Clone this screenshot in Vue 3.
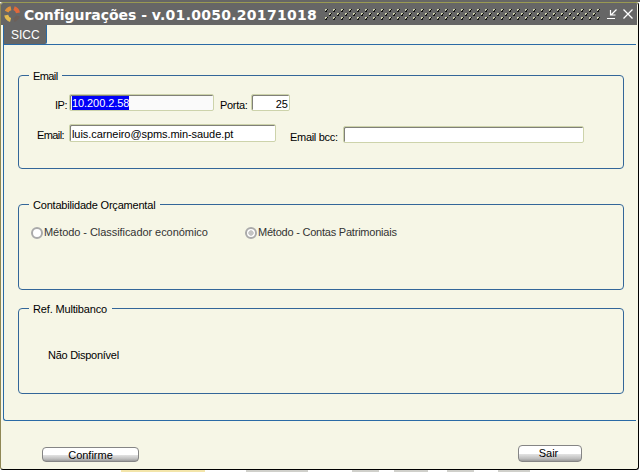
<script setup>
import { ref } from 'vue'
const ip = '10.200.2.58'
const porta = '25'
const email = 'luis.carneiro@spms.min-saude.pt'
const metodo = ref('contas')
</script>

<template>
  <div class="screen">
    <div class="window">
      <header class="titlebar">
        <svg class="logo" width="16" height="18" viewBox="0 0 16 18">
          <path d="M2.6 6.6A6.2 6.2 0 0 1 7 3.2" stroke="#e0913c" />
          <path d="M10 3.2A6.2 6.2 0 0 1 14 7.8" stroke="#e0683a" />
          <path d="M2.2 10.2A6.2 6.2 0 0 0 6.6 15" stroke="#e4bb50" />
          <path d="M10 15A6.2 6.2 0 0 0 14 11" stroke="#6d5f58" />
        </svg>
        <h1 class="title"><span class="name">Configurações - </span><span class="version">v.01.0050.20171018</span></h1>
        <svg class="grip" width="276" height="11">
          <defs>
            <pattern id="dots" width="8" height="8" patternUnits="userSpaceOnUse" shape-rendering="crispEdges">
              <path d="M1 1h1v1h-1zM2 0h1v1h-1zM5 5h1v1h-1zM6 4h1v1h-1zM0 2h2v1h-2zM4 6h2v1h-2z" fill="#111" />
              <path d="M0 0h2v1h-1v1h-1zM4 4h2v1h-1v1h-1z" fill="#d0d3b0" />
            </pattern>
          </defs>
          <rect width="276" height="11" fill="url(#dots)" />
        </svg>
        <svg class="tool" width="10" height="11" viewBox="0 0 10 11">
          <path d="M0 9.5h8M3.5 1v5h5M9.5 0.5L4 6" stroke="#fff" stroke-width="1.2" fill="none" />
        </svg>
        <svg class="close" width="10" height="10" viewBox="0 0 10 10">
          <path d="M0.5 0.5l9 9M9.5 0.5l-9 9" stroke="#fff" stroke-width="1.3" fill="none" />
        </svg>
      </header>

      <main class="page">
        <nav class="tabs"><span class="tab">SICC</span></nav>
        <section class="panel">
          <section class="group g-email">
            <h2 class="legend l1"><span>Email</span></h2>
            <div class="row r1">
              <span class="label ip">IP:</span>
              <div class="field f-ip"><span class="selected">{{ ip }}</span></div>
              <span class="label porta">Porta:</span>
              <div class="field f-porta">{{ porta }}</div>
            </div>
            <div class="row r2">
              <span class="label mail">Email:</span>
              <div class="field f-mail"><span class="mailtext">{{ email }}</span></div>
              <span class="label bcc">Email bcc:</span>
              <div class="field f-bcc"></div>
            </div>
          </section>

          <section class="group g-conta">
            <h2 class="legend l2"><span>Contabilidade Orçamental</span></h2>
            <div class="radios">
              <span class="radio" :class="{ on: metodo === 'class' }"></span>
              <span class="rlabel first">Método - Classificador económico</span>
              <span class="radio" :class="{ on: metodo === 'contas' }"></span>
              <span class="rlabel second">Método - Contas Patrimoniais</span>
            </div>
          </section>

          <section class="group g-ref">
            <h2 class="legend l3"><span>Ref. Multibanco</span></h2>
            <p class="none"><span>Não Disponível</span></p>
          </section>
        </section>
        <footer class="actions">
          <button class="btn confirm">Confirme</button>
          <button class="btn sair">Sair</button>
        </footer>
      </main>
    </div>
    <div class="behind">
      <i class="y"></i><i class="a"></i><i class="b"></i><i class="c"></i><i class="d"></i><i class="e"></i>
    </div>
  </div>
</template>

<style>
body { margin: 0; background: #fff; overflow: hidden; }
</style>

<style scoped>
* { box-sizing: border-box; }
.screen { width: 640px; height: 472px; padding-top: 2px; overflow: hidden; background: linear-gradient(#666 0 2px, #fff 2px);
  font: 11px/13px "Liberation Sans", Arial, sans-serif; color: #000; }
.window { width: 639px; height: 468px; border-top: 1px solid #999952; border-left: 1px solid #8f8755; border-right: 1px solid #000;
  border-bottom: 1px solid #000; border-radius: 3px; background: #f6f6e6; overflow: hidden; }
.titlebar { display: flex; height: 22px; width: 636px; background: #666; }
.logo { margin: 2px 0 0 3px; fill: none; stroke-width: 4; flex: none; }
.title { width: 301px; margin: 1px 0 0 4px; font: bold 14px/23px "DejaVu Sans", Verdana, sans-serif; color: #fff; white-space: pre; flex: none; }
.name { letter-spacing: -0.04px; }
.version { letter-spacing: 0.27px; }
.grip { margin: 6px 0 0 0; flex: none; }
.tool { margin: 6px 0 0 6px; flex: none; }
.close { margin: 6px 0 0 6px; flex: none; }
.page { height: 444px; padding-left: 2px; }
.tabs { height: 19px; }
.tab { display: block; width: 44px; height: 19px; background: #666; border-left: 1px solid #2a6aa5; border-right: 1px solid #2a6aa5;
  border-bottom-right-radius: 2px; padding-left: 7px; color: #fff; font-size: 12px; line-height: 20px; }
.panel { width: 633px; height: 377px; border: 1px solid #2a6aa5; border-right: 0; border-bottom-left-radius: 3px; padding: 30px 0 0 14px; }
.group { width: 606px; border: 1px solid #336699; border-radius: 4px; }
.g-email { height: 94px; }
.g-conta { height: 86px; margin-top: 35px; }
.g-ref { height: 86px; margin-top: 18px; }
.legend { margin: -7px 0 0 10px; height: 13px; padding-left: 4px; background: #f6f6e6; font: 11px/15px "Liberation Sans", Arial, sans-serif; white-space: nowrap; }
.l1 { width: 33px; letter-spacing: -0.6px; }
.l2 { width: 131px; letter-spacing: -0.2px; }
.l3 { width: 83px; letter-spacing: -0.16px; }
.row { display: flex; align-items: flex-start; white-space: nowrap; }
.r1 { margin-top: 12px; height: 30px; }
.r2 { height: 20px; }
.label { flex: none; }
.ip { width: 14px; margin: 5px 0 0 36px; letter-spacing: -0.5px; }
.porta { width: 31px; margin: 5px 0 0 6px; letter-spacing: -0.3px; }
.mail { width: 32px; margin: 5px 0 0 18px; letter-spacing: -0.6px; }
.bcc { width: 53px; margin: 7px 0 0 14px; letter-spacing: -0.3px; }
.field { height: 17px; border: 1px solid #cdd3ab; border-radius: 2px; background: #fff; box-shadow: inset 1px 1px #808078; padding: 2px 2px 0; line-height: 14px; flex: none; }
.f-ip { width: 145px; background: #fafafa; }
.f-porta { width: 39px; text-align: right; padding-right: 1px; }
.f-mail { width: 207px; height: 18px; letter-spacing: -0.07px; }
.f-bcc { width: 241px; margin-top: 2px; }
.selected { display: block; width: 57px; height: 14px; margin-top: -1px; line-height: 15px; background: #0000f8; color: #fff; letter-spacing: -0.08px; }
.radios { display: flex; margin: 16px 0 0 12px; color: #333; white-space: nowrap; }
.radio { width: 12px; height: 12px; border: 2px solid #aaa; border-radius: 50%; background: #fff; flex: none; }
.radio.on { background: radial-gradient(circle, #c4c4c4 0 2.4px, #fff 3px); }
.rlabel { flex: none; margin: -1px 0 0 1px; }
.first { width: 201px; letter-spacing: -0.06px; }
.second { letter-spacing: -0.22px; }
.none { margin: 34px 0 0 29px; white-space: nowrap; letter-spacing: -0.27px; }
.actions { display: flex; padding: 24px 0 0 39px; }
.btn { border: 1px solid #858585; border-radius: 4px; padding: 0; font: 11px/15px "Liberation Sans", Arial, sans-serif; color: #000;
  background: linear-gradient(#fff 0 50%, #e2e2e2 55%, #bdbdbd 85%, #999); }
.confirm { width: 97px; height: 15px; margin-top: 2px; }
.sair { width: 64px; height: 17px; margin-left: 379px; padding-right: 3px; }
.behind { display: flex; height: 2px; }
.behind i { height: 2px; background: #d0d0cb; flex: none; }
.behind .y { width: 84px; margin-left: 121px; background: #f3e5aa; }
.behind .a { width: 62px; margin-left: 41px; }
.behind .b { width: 27px; margin-left: 44px; }
.behind .c { width: 34px; margin-left: 15px; }
.behind .d { width: 27px; margin-left: 19px; }
.behind .e { width: 32px; margin-left: 24px; }
</style>
